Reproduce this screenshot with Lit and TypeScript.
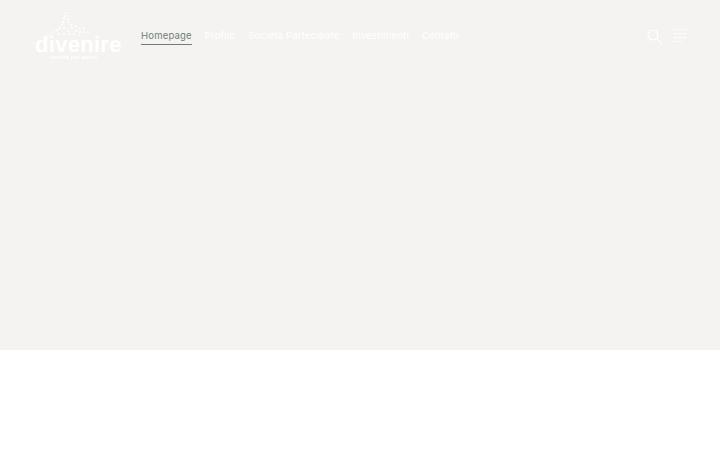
import { LitElement, html, css, svg } from "lit";
import { customElement } from "lit/decorators.js";

const dots: [number, number, number][] = [
  [31, 1, 1.1], [30, 4, 1.1], [29, 7, 1.1], [28, 10, 1.1], [33, 7, .9], [34, 10, .9], [27, 13, 1.1], [36, 13, .9],
  [25, 16, 1.1], [22, 18, 1], [19, 20, 1], [16, 22, .9], [13, 24, .9], [37, 16, 1], [41, 19, 1], [45, 20, 1],
  [49, 20, 1], [53, 20, 1], [29, 16, 1], [33, 19, 1], [24, 22, 1], [29, 22, 1], [34, 22, 1], [39, 22, 1], [44, 23, 1],
  [49, 16, 1], [45, 17, 1], [41, 14, 1],
];

@customElement("app-root")
export class AppRoot extends LitElement {
  static styles = css`
    :host { display: block; width: 100%; height: 450px; background: #fff; font-family: "Inter", "Liberation Sans", sans-serif; }
    .hero { height: 350px; background: #f5f3f1; }
    .bar { display: flex; align-items: flex-start; padding: 12px 34px 0 35px; }
    .logo { width: 77px; height: 44px; flex: none; display: flex; flex-direction: column; color: #fff; }
    .logo svg { display: block; flex: none; }
    .name { font-family: "Liberation Sans", sans-serif; font-weight: 700; font-size: 22px; line-height: 17px; margin-top: -3px; letter-spacing: .3px; }
    .tag { font-family: "Liberation Sans", sans-serif; font-size: 5px; line-height: 6px; font-weight: 700; text-align: center; margin-top: 1px; letter-spacing: .3px; }
    nav { display: flex; gap: 13px; margin: 18px 0 0 29px; font-size: 9.5px; line-height: 12px; letter-spacing: .2px; color: #fff; }
    nav a { display: block; padding-bottom: 2px; border-bottom: 1px solid transparent; white-space: nowrap; }
    nav a.on { color: #6f7f78; border-bottom-color: #6f7f78; }
    .tools { margin-left: auto; display: flex; gap: 12px; margin-top: 17px; }
    svg.ic { display: block; }
  `;
  render() {
    return html`<div class="hero"><div class="bar">
      <div class="logo">
        <svg width="77" height="27" viewBox="0 0 77 27" fill="#fff">
          ${dots.map(([x, y, r]) => svg`<circle cx=${x} cy=${y} r=${r}></circle>`)}
        </svg>
        <div class="name">divenire</div>
        <div class="tag">società per azioni</div>
      </div>
      <nav>
        <a class="on">Homepage</a><a>Profilo</a><a>Società Partecipate</a><a>Investimenti</a><a>Contatti</a>
      </nav>
      <div class="tools">
        <svg class="ic" width="15" height="15" viewBox="0 0 15 15" fill="none" stroke="#fff" stroke-width="1.2">
          <circle cx="6" cy="6" r="5"></circle><path d="M9.6 9.6 14.5 14.5"></path>
        </svg>
        <svg class="ic" width="12" height="13" viewBox="0 0 12 13" fill="#fff">
          <path d="M0 0h3v1H0zM4.5 0h3v1h-3zM9 0h3v1H9zM0 4h3v1H0zM4.5 4h3v1h-3zM9 4h3v1H9zM0 8h3v1H0zM4.5 8h3v1h-3zM9 8h3v1H9zM0 12h3v1H0zM4.5 12h3v1h-3z"></path>
        </svg>
      </div>
    </div></div>`;
  }
}
